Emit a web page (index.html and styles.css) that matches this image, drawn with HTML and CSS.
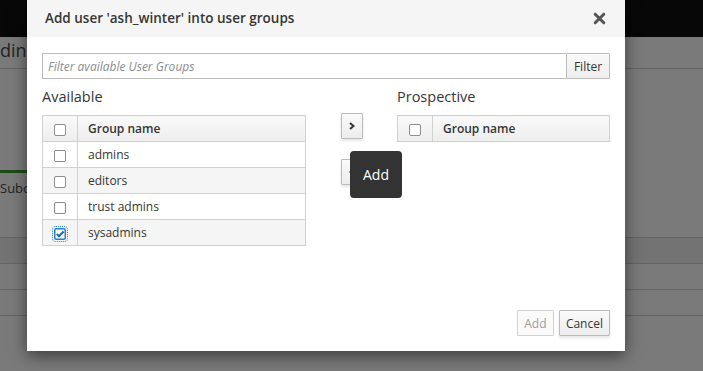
FILE: index.html
```html
<!DOCTYPE html>
<html lang="en">
<head>
    <meta charset="UTF-8">
    <meta name="viewport" content="width=device-width, initial-scale=1.0">
    <title>Add user into user groups</title>
    <link rel="stylesheet" href="styles.css">
</head>
<body>
    <div class="page">
        <div class="topbar"></div>
        <div class="crumb">dinate</div>
        <div class="tabs"><span class="tab-line"></span></div>
        <div class="subtab">Subordinate ids</div>
        <div class="rows">
            <div class="row head"></div>
            <div class="row"></div>
            <div class="row"></div>
            <div class="row"></div>
        </div>
    </div>
    <div class="overlay"></div>

    <div class="dialog">
        <div class="dialog-header">
            <h4>Add user 'ash_winter' into user groups</h4>
            <svg class="close" width="13" height="13" viewBox="0 0 13 13">
                <path d="M2.2 2.2 L10.8 10.8 M10.8 2.2 L2.2 10.8" stroke="#555" stroke-width="3" stroke-linecap="round"/>
            </svg>
        </div>
        <div class="dialog-body">
            <div class="filter-row">
                <input type="text" class="filter-input" placeholder="Filter available User Groups">
                <button class="btn filter-btn">Filter</button>
            </div>
            <div class="adder">
                <div class="panel">
                    <div class="panel-title">Available</div>
                    <table class="grid">
                        <thead>
                            <tr><th class="cb-col"><span class="cb"></span></th><th>Group name</th></tr>
                        </thead>
                        <tbody>
                            <tr><td class="cb-col"><span class="cb"></span></td><td>admins</td></tr>
                            <tr class="alt"><td class="cb-col"><span class="cb"></span></td><td>editors</td></tr>
                            <tr><td class="cb-col"><span class="cb"></span></td><td>trust admins</td></tr>
                            <tr class="alt"><td class="cb-col">
                                <span class="cb checked">
                                    <svg width="12" height="12" viewBox="0 0 12 12">
                                        <rect x="0.75" y="0.75" width="10.5" height="10.5" rx="1.5" fill="#fff" stroke="#2b7fc0" stroke-width="1.5"/>
                                        <path d="M2.8 6 L5 8.2 L9.6 3.4" fill="none" stroke="#1f6fb0" stroke-width="2.2"/>
                                    </svg>
                                </span>
                            </td><td>sysadmins</td></tr>
                        </tbody>
                    </table>
                </div>
                <div class="mover">
                    <button class="btn arrow-btn">
                        <svg width="8" height="8" viewBox="0 0 8 8"><path d="M2 1 L5.5 4 L2 7" fill="none" stroke="#363636" stroke-width="2"/></svg>
                    </button>
                    <button class="btn arrow-btn">
                        <svg width="8" height="8" viewBox="0 0 8 8"><path d="M6 1 L2.5 4 L6 7" fill="none" stroke="#363636" stroke-width="2"/></svg>
                    </button>
                    <div class="tooltip">Add</div>
                </div>
                <div class="panel">
                    <div class="panel-title">Prospective</div>
                    <table class="grid">
                        <thead>
                            <tr><th class="cb-col"><span class="cb"></span></th><th>Group name</th></tr>
                        </thead>
                    </table>
                </div>
            </div>
        </div>
        <div class="dialog-footer">
            <button class="btn add-btn" disabled>Add</button>
            <button class="btn">Cancel</button>
        </div>
    </div>
</body>
</html>
```

FILE: styles.css
```css
body {
    margin: 0;
    font-family: "Open Sans", "Liberation Sans", sans-serif;
    color: #363636;
    background-color: #fff;
    width: 703px;
    height: 371px;
    overflow: hidden;
    position: relative;
}
.page {
    display: flex;
    flex-direction: column;
}
.topbar {
    height: 37px;
    background-color: #101010;
}
.crumb {
    height: 31px;
    line-height: 26px;
    font-size: 18px;
    color: #4d4d4d;
    border-bottom: 1px solid #d1d1d1;
}
.tabs {
    height: 104px;
    display: flex;
    align-items: flex-end;
}
.tab-line {
    display: block;
    width: 200px;
    height: 3px;
    background-color: #3f9c35;
}
.subtab {
    width: 110px;
    height: 30px;
    line-height: 30px;
    font-size: 13px;
    color: #4d4d4d;
}
.rows {
    margin-top: 34px;
}
.row {
    height: 25px;
    border-top: 1px solid #d1d1d1;
}
.row.head {
    background-color: #f0f0f0;
}
.overlay {
    position: absolute;
    inset: 0;
    background-color: rgba(0, 0, 0, 0.52);
}

.dialog {
    position: absolute;
    left: 27px;
    top: 0;
    width: 598px;
    height: 351px;
    background-color: #fff;
    box-shadow: 0 5px 15px rgba(0, 0, 0, 0.5);
    display: flex;
    flex-direction: column;
}
.dialog-header {
    height: 37px;
    background-color: #f5f5f5;
    display: flex;
    align-items: center;
    justify-content: space-between;
    padding: 0 19px 0 18px;
}
.dialog-header h4 {
    margin: 0;
    font-size: 13.5px;
    font-weight: 600;
    margin-top: -2px;
}
.dialog-body {
    padding: 16px 15px 0 15px;
}
.filter-row {
    display: flex;
    height: 26px;
    margin-bottom: 8px;
}
.filter-input {
    flex: 1;
    height: 26px;
    box-sizing: border-box;
    border: 1px solid #bbb;
    border-right: none;
    padding: 0 5px;
    font-family: inherit;
    font-size: 12px;
    outline: none;
}
.filter-input::placeholder {
    color: #8b8d8f;
    font-style: italic;
}
.btn {
    font-family: inherit;
    font-size: 12px;
    font-weight: 400;
    color: #363636;
    background: linear-gradient(#fafafa, #ededed);
    border: 1px solid #bbb;
    border-radius: 1px;
    box-shadow: 0 2px 3px rgba(3, 3, 3, 0.1);
    padding: 0 6px;
    height: 26px;
    box-sizing: border-box;
}
.btn:disabled {
    color: #9c9c9c;
    background: #fafafa;
    border-color: #d1d1d1;
    box-shadow: none;
}
.add-btn {
    width: 37px;
}
.filter-btn {
    width: 44px;
    box-shadow: none;
}
.adder {
    display: grid;
    grid-template-columns: 264px 1fr 213px;
}
.panel-title {
    font-size: 14.5px;
    line-height: 20px;
    height: 20px;
    margin-bottom: 8px;
}
.grid {
    border-collapse: collapse;
    width: 100%;
    font-size: 12px;
}
.grid th, .grid td {
    border: 1px solid #d1d1d1;
    height: 25px;
    padding: 0 10px;
    text-align: left;
}
.grid th {
    font-weight: 600;
    background: linear-gradient(#fafafa, #ededed);
}
.grid .cb-col {
    width: 35px;
    padding: 0;
    text-align: center;
    box-sizing: border-box;
}
.grid tr.alt td {
    background-color: #f5f5f5;
}
.cb {
    display: inline-block;
    width: 10px;
    height: 10px;
    border: 1px solid #8d8d8d;
    border-radius: 2px;
    background-color: #fff;
    vertical-align: middle;
}
.cb.checked {
    width: 12px;
    height: 12px;
    border: none;
    outline: 1px dotted #2b7fc0;
    outline-offset: 1px;
}
.cb.checked svg {
    display: block;
}
.mover {
    position: relative;
    display: flex;
    flex-direction: column;
    align-items: center;
    gap: 20px;
    padding-top: 26px;
}
.arrow-btn {
    width: 22px;
    height: 26px;
    padding: 0;
    display: flex;
    align-items: center;
    justify-content: center;
}
.tooltip {
    position: absolute;
    left: 44px;
    top: 64px;
    width: 52px;
    height: 47px;
    border-radius: 4px;
    background-color: #333;
    color: #fff;
    font-size: 14px;
    display: flex;
    align-items: center;
    justify-content: center;
}
.dialog-footer {
    margin-top: auto;
    display: flex;
    justify-content: flex-end;
    gap: 5px;
    padding: 0 15px 15px 0;
}
```
